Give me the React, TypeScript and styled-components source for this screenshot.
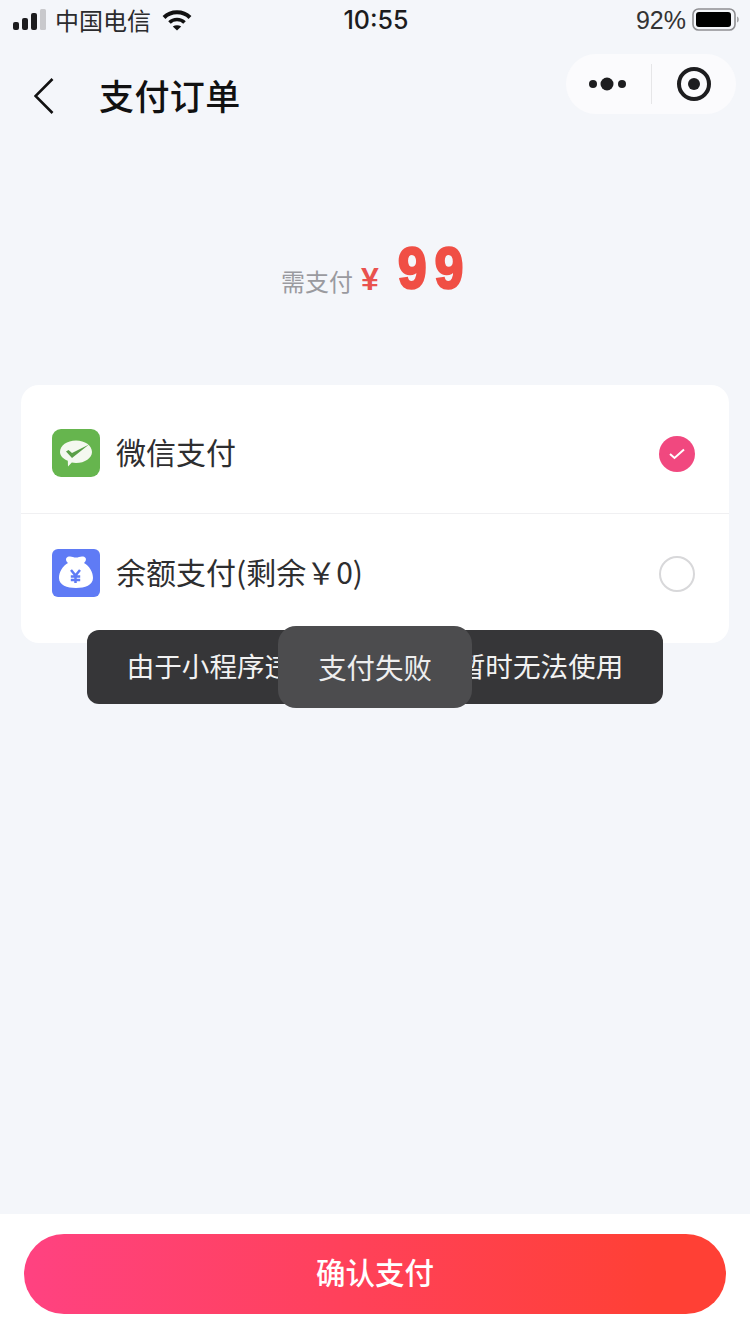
import styled, { createGlobalStyle } from 'styled-components';

const GlobalStyle = createGlobalStyle`
  html, body {
    margin: 0;
    padding: 0;
    background: #f4f6fa;
  }
  * {
    box-sizing: border-box;
  }
`;

const cjk = `"Noto Sans CJK SC", "Noto Sans", sans-serif`;
const latin = `"Liberation Sans", "Noto Sans CJK SC", sans-serif`;

const Page = styled.div`
  position: relative;
  width: 750px;
  height: 1334px;
  overflow: hidden;
  display: flex;
  flex-direction: column;
  background: #f4f6fa;
  color: #222;
  font-family: ${cjk};
`;

const StatusBar = styled.div`
  height: 40px;
  padding: 0 11px 0 13px;
  display: grid;
  grid-template-columns: 1fr auto 1fr;
  align-items: center;
  flex: none;
`;

const StatusLeft = styled.div`
  display: flex;
  align-items: center;
`;

const Carrier = styled.span`
  margin-left: 9px;
  margin-right: 11px;
  font-size: 24px;
  line-height: 40px;
  color: #2b2b2d;
`;

const Clock = styled.span`
  font-family: Inter, ${latin};
  font-size: 25px;
  font-weight: 500;
  color: #1c1c1e;
`;

const StatusRight = styled.div`
  display: flex;
  align-items: center;
  justify-content: flex-end;
  gap: 6px;
`;

const Percent = styled.span`
  font-family: ${latin};
  font-size: 25px;
  color: #333;
`;

const NavBar = styled.div`
  height: 74px;
  margin-top: 14px;
  padding: 0 14px 0 34px;
  display: flex;
  align-items: flex-start;
  flex: none;
`;

const BackButton = styled.div`
  width: 20px;
  height: 36px;
  margin-top: 24px;
`;

const Title = styled.h1`
  margin: 19px 0 0 45px;
  font-size: 35px;
  line-height: 44px;
  font-weight: 500;
  color: #111;
  letter-spacing: 0.4px;
`;

const Capsule = styled.div`
  margin-left: auto;
  width: 170px;
  height: 60px;
  border-radius: 30px;
  background: #fbfbfd;
  display: flex;
  align-items: center;
`;

const CapsulePart = styled.div`
  flex: 1;
  display: flex;
  align-items: center;
  justify-content: center;
`;

const CapsuleDivider = styled.div`
  width: 1px;
  height: 40px;
  background: #e6e6e8;
`;

const Amount = styled.div`
  height: 257px;
  padding: 108px 0 0 281px;
  display: flex;
  align-items: flex-start;
  flex: none;
`;

const AmountLabel = styled.span`
  margin-top: 27px;
  font-size: 24px;
  line-height: 36px;
  color: #9a9a9f;
`;

const Yen = styled.span`
  margin: 25px 0 0 8px;
  width: 37px;
  font-family: ${latin};
  font-size: 32px;
  line-height: 36px;
  font-weight: 700;
  color: #e9524e;
`;

const Price = styled.span`
  display: inline-block;
  font-family: "Liberation Sans", sans-serif;
  font-size: 57px;
  line-height: 64px;
  font-weight: 700;
  letter-spacing: 9px;
  color: #f04f45;
  -webkit-text-stroke: 2.5px #f04f45;
  transform: scaleX(0.9);
  transform-origin: left center;
`;

const MethodCard = styled.div`
  width: 708px;
  height: 258px;
  margin-left: 21px;
  border-radius: 18px;
  background: #fff;
  flex: none;
`;

const FirstRow = styled.div`
  height: 129px;
  padding: 8px 34px 0 31px;
  display: flex;
  align-items: center;
  border-bottom: 1px solid #f0f0f2;
`;

const SecondRow = styled.div`
  height: 129px;
  padding: 0 34px 12px 31px;
  display: flex;
  align-items: center;
`;

const MethodIcon = styled.svg`
  width: 48px;
  height: 48px;
  flex: none;
`;

const MethodName = styled.span`
  margin: 0 0 4px 16px;
  flex: 1;
  font-size: 30px;
  line-height: 40px;
  color: #2e2e30;
`;

const Radio = styled.div<{ $checked?: boolean }>`
  width: 36px;
  height: 36px;
  margin-top: 2px;
  border-radius: 50%;
  display: flex;
  align-items: center;
  justify-content: center;
  background: ${(p) => (p.$checked ? '#f1487f' : '#fff')};
  border: ${(p) => (p.$checked ? 'none' : '2px solid #d8d8da')};
`;

const Spacer = styled.div`
  flex: 1;
`;

const Footer = styled.div`
  height: 120px;
  padding: 20px 24px 0;
  background: #fff;
  flex: none;
`;

const ConfirmButton = styled.button`
  width: 100%;
  height: 80px;
  border: none;
  border-radius: 40px;
  padding: 0 0 7px;
  background: linear-gradient(90deg, #ff4281 0%, #ff4035 90%);
  color: #fff;
  font-family: ${cjk};
  font-size: 29.5px;
  font-weight: 500;
`;

const Notice = styled.div`
  position: absolute;
  left: 87px;
  top: 630px;
  width: 576px;
  height: 74px;
  border-radius: 12px;
  background: #363638;
  color: #f2f2f2;
  font-size: 27.6px;
  line-height: 71px;
  text-align: center;
  white-space: nowrap;
`;

const Toast = styled.div`
  position: absolute;
  left: 278px;
  top: 626px;
  width: 194px;
  height: 82px;
  border-radius: 18px;
  background: #4c4c4e;
  color: #eee;
  font-size: 28.4px;
  line-height: 81px;
  text-align: center;
`;

const SignalIcon = () => (
  <svg width="33" height="22" viewBox="0 0 33 22">
    <rect x="0" y="13" width="6" height="8" rx="2" fill="#1c1c1e" />
    <rect x="9" y="9" width="6" height="12" rx="2" fill="#1c1c1e" />
    <rect x="18" y="4" width="6" height="17" rx="2" fill="#1c1c1e" />
    <rect x="27" y="0" width="6" height="21" rx="1.5" fill="#c9c9cc" />
  </svg>
);

const WifiIcon = () => (
  <svg width="30" height="22" viewBox="0 0 30 22">
    <path d="M2 8.500C9 1.500 21 1.500 28 8.500" fill="none" stroke="#111" strokeWidth="4" />
    <path d="M7.500 13.500C11.500 9.500 18.500 9.500 22.500 13.500" fill="none" stroke="#111" strokeWidth="3.600" />
    <path d="M10.800 17.500C13.300 15.800 16.700 15.800 19.200 17.500L15 21.500Z" fill="#111" />
  </svg>
);

const BatteryIcon = () => (
  <svg width="47" height="24" viewBox="0 0 47 24">
    <rect x="1" y="1" width="42" height="21" rx="5.5" fill="none" stroke="#8e8e92" strokeWidth="1.6" />
    <rect x="4" y="4" width="35" height="15" rx="3" fill="#000" />
    <path d="M45 8.500C46.400 9 46.800 10.200 46.800 11.500C46.800 12.800 46.400 14 45 14.500Z" fill="#a5a5a8" />
  </svg>
);

const BackIcon = () => (
  <svg width="20" height="36" viewBox="0 0 20 36">
    <path d="M18.500 1L1.500 18L18.500 35" fill="none" stroke="#111" strokeWidth="2.600" />
  </svg>
);

const DotsIcon = () => (
  <svg width="40" height="16" viewBox="0 0 40 16">
    <circle cx="5" cy="8" r="4" fill="#1d1d1f" />
    <circle cx="19" cy="8" r="6.500" fill="#1d1d1f" />
    <circle cx="34" cy="8" r="4" fill="#1d1d1f" />
  </svg>
);

const TargetIcon = () => (
  <svg width="36" height="36" viewBox="0 0 36 36">
    <circle cx="18" cy="18" r="15" fill="none" stroke="#1d1d1f" strokeWidth="4" />
    <circle cx="18" cy="18" r="6" fill="#1d1d1f" />
  </svg>
);

const WechatIcon = () => (
  <MethodIcon viewBox="0 0 48 48">
    <rect width="48" height="48" rx="9" fill="#66b54e" />
    <path
      d="M24 11.500C33 11.500 40 16.500 40 23C40 29 33 34 24 34C22.500 34 21 33.800 19.800 33.500L16 37.500L15.800 31.800C10.800 29.800 8 26.500 8 23C8 16.500 15 11.500 24 11.500Z"
      fill="#f4f8f0"
    />
    <path d="M14 22.500L16.500 21L20 24L37 15.500L20 29Z" fill="#5a9f48" />
  </MethodIcon>
);

const BalanceIcon = () => (
  <MethodIcon viewBox="0 0 48 48">
    <rect width="48" height="48" rx="6" fill="#5f7bf5" />
    <path
      d="M16 14C13 11.500 13.500 8 17 7.500C19.500 7 21.500 8.500 24 8.500C26.500 8.500 28.500 7 31 7.500C34.500 8 35 11.500 32 14C37.500 17 41 23 41 29C41 36 33 39 24 39C15 39 7 36 7 29C7 23 10.500 17 16 14Z"
      fill="#fff"
    />
    <path
      d="M19 21L23.500 26.500L28 21M23.500 26.500V34M18.800 27.500H28.200M18.800 31H28.200"
      fill="none"
      stroke="#5f7bf5"
      strokeWidth="2.500"
    />
  </MethodIcon>
);

const CheckIcon = () => (
  <svg width="18" height="14" viewBox="0 0 18 14">
    <path d="M2 7L6.500 11L16 2.500" fill="none" stroke="#fff" strokeWidth="2" />
  </svg>
);

const App = () => {
  return (
    <Page>
      <GlobalStyle />
      <StatusBar>
        <StatusLeft>
          <SignalIcon />
          <Carrier>中国电信</Carrier>
          <WifiIcon />
        </StatusLeft>
        <Clock>10:55</Clock>
        <StatusRight>
          <Percent>92%</Percent>
          <BatteryIcon />
        </StatusRight>
      </StatusBar>
      <NavBar>
        <BackButton>
          <BackIcon />
        </BackButton>
        <Title>支付订单</Title>
        <Capsule>
          <CapsulePart>
            <DotsIcon />
          </CapsulePart>
          <CapsuleDivider />
          <CapsulePart>
            <TargetIcon />
          </CapsulePart>
        </Capsule>
      </NavBar>
      <Amount>
        <AmountLabel>需支付</AmountLabel>
        <Yen>¥</Yen>
        <Price>99</Price>
      </Amount>
      <MethodCard>
        <FirstRow>
          <WechatIcon />
          <MethodName>微信支付</MethodName>
          <Radio $checked>
            <CheckIcon />
          </Radio>
        </FirstRow>
        <SecondRow>
          <BalanceIcon />
          <MethodName>余额支付(剩余￥0)</MethodName>
          <Radio />
        </SecondRow>
      </MethodCard>
      <Spacer />
      <Footer>
        <ConfirmButton>确认支付</ConfirmButton>
      </Footer>
      <Notice>由于小程序违规，余额支付暂时无法使用</Notice>
      <Toast>支付失败</Toast>
    </Page>
  );
};

export default App;
